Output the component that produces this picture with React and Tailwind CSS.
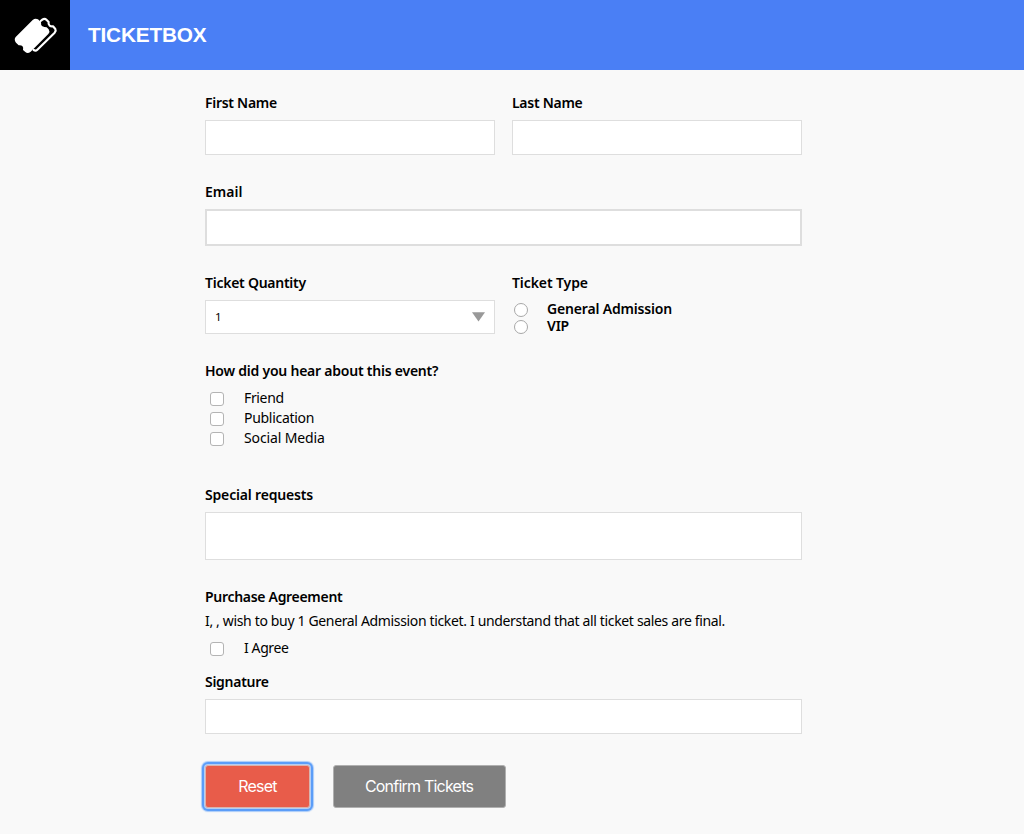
const label = "h-5 text-[14px] leading-5 font-semibold whitespace-nowrap";
const box = "block w-full border border-[#dedede] bg-white outline-none rounded-none";

function Check({ text, textClass }) {
  return (
    <label className="flex h-5 items-center">
      <input type="checkbox" className="ml-[5px] mt-[2px] size-[14px] appearance-none rounded-[3px] border border-[#b4b4b4] bg-white" />
      <span className={"ml-5 text-[14px] leading-5 whitespace-nowrap " + textClass}>{text}</span>
    </label>
  );
}

function Radio({ text, textClass }) {
  return (
    <label className="flex h-[17px] items-center">
      <input type="radio" name="type" className="ml-[2px] mt-[3px] size-[14px] appearance-none rounded-full border border-[#a8a8a8] bg-white" />
      <span className={"ml-[19px] text-[14px] leading-[17px] font-semibold whitespace-nowrap " + textClass}>{text}</span>
    </label>
  );
}

export default function App() {
  return (
    <div className="min-h-[834px] bg-[#f9f9f9] font-['Noto_Sans',sans-serif] text-black">
      <header className="flex h-[70px] items-center bg-[#4a7ff5]">
        <div className="size-[70px] bg-black">
          <svg viewBox="0 0 210 210" className="size-[70px]">
            <path fill="#fff" d="M98 60 Q106 53 114 58 L123 67 Q122 75 127 79 Q133 82 140 82 L146 88 Q151 95 145 102 L92 155 Q83 162 76 156 L69 150 Q71 142 67 138 Q63 135 56 136 L48 128 Q41 119 47 111 Z" />
            <path fill="none" stroke="#fff" strokeWidth="6.5" strokeLinejoin="round" strokeLinecap="round" d="M122 63 L127 59 Q134 54 140 60 L146 66 Q144 73 149 77 Q153 80 159 79 L166 87 Q169 92 164 98 L112 149 Q107 154 101 150" />
          </svg>
        </div>
        <h1 className="ml-[18px] font-['Liberation_Sans',Arial,sans-serif] text-[20.8px] leading-[70px] font-bold tracking-[-0.2px] text-white">TICKETBOX</h1>
      </header>

      <form className="ml-[205px] flex w-[597px] flex-col pt-[23px]">
        <div className="grid grid-cols-2 gap-[17px]">
          <div>
            <div className={label}><span className="tracking-[-0.28px]">First Name</span></div>
            <input className={box + " mt-[7px] h-[35px]"} />
          </div>
          <div>
            <div className={label}><span className="tracking-[-0.28px]">Last Name</span></div>
            <input className={box + " mt-[7px] h-[35px]"} />
          </div>
        </div>

        <div className={label + " mt-[27px]"}><span className="tracking-[0.02px]">Email</span></div>
        <input className="mt-[7px] block h-[37px] w-full border-2 border-[#dedede] bg-white outline-none" />

        <div className="mt-[27px] grid grid-cols-2 gap-[17px]">
          <div>
            <div className={label}><span className="tracking-[-0.26px]">Ticket Quantity</span></div>
            <div className={box + " mt-[7px] h-[34px]"}>
              <div className="flex h-8 items-center justify-between pr-[9px] pl-[9px] text-[11.5px]">
                <span>1</span>
                <svg width="13" height="10" viewBox="0 0 13 10"><path fill="#999" d="M0 0.3H13L6.5 9.5Z" /></svg>
              </div>
            </div>
          </div>
          <div>
            <div className={label}><span className="tracking-[-0.1px]">Ticket Type</span></div>
            <div className="mt-[7px]">
              <Radio text="General Admission" textClass="tracking-[-0.17px]" />
              <Radio text="VIP" textClass="tracking-[-0.2px]" />
            </div>
          </div>
        </div>

        <div className={label + " mt-[27px]"}><span className="tracking-[-0.23px]">How did you hear about this event?</span></div>
        <div className="mt-[7px]">
          <Check text="Friend" textClass="tracking-[-0.35px]" />
          <Check text="Publication" textClass="tracking-[-0.29px]" />
          <Check text="Social Media" textClass="tracking-[-0.12px]" />
        </div>

        <div className={label + " mt-[37px]"}><span className="tracking-[-0.17px]">Special requests</span></div>
        <textarea className={box + " mt-[7px] h-12 resize-none"} />

        <div className={label + " mt-[27px]"}><span className="tracking-[-0.3px]">Purchase Agreement</span></div>
        <p className="mt-1 h-5 text-[14px] leading-5 whitespace-nowrap"><span className="tracking-[-0.345px]">I, , wish to buy 1 General Admission ticket. I understand that all ticket sales are final.</span></p>
        <div className="mt-[7px]">
          <Check text="I Agree" textClass="tracking-[-0.4px]" />
        </div>

        <div className={label + " mt-[14px]"}><span className="tracking-[-0.28px]">Signature</span></div>
        <input className={box + " mt-[7px] h-[35px]"} />

        <div className="mt-[31px] flex gap-[22.5px] font-['Inter',sans-serif] text-[16px] tracking-[-0.78px] text-white">
          <button type="button" className="h-[43px] w-[105px] rounded-[3px] border border-[#d9b3ad] bg-[#e85c4a] pb-[2px] shadow-[0_0_0_1px_#b5cdf3,0_0_0_3px_#5b9df8,0_0_1px_4px_#a9cbf9]"><span>Reset</span></button>
          <button type="button" className="h-[43px] w-[173px] rounded-[3px] border border-[#b0b0b0] bg-[#808080] pb-[2px]"><span>Confirm Tickets</span></button>
        </div>
      </form>
    </div>
  );
}
